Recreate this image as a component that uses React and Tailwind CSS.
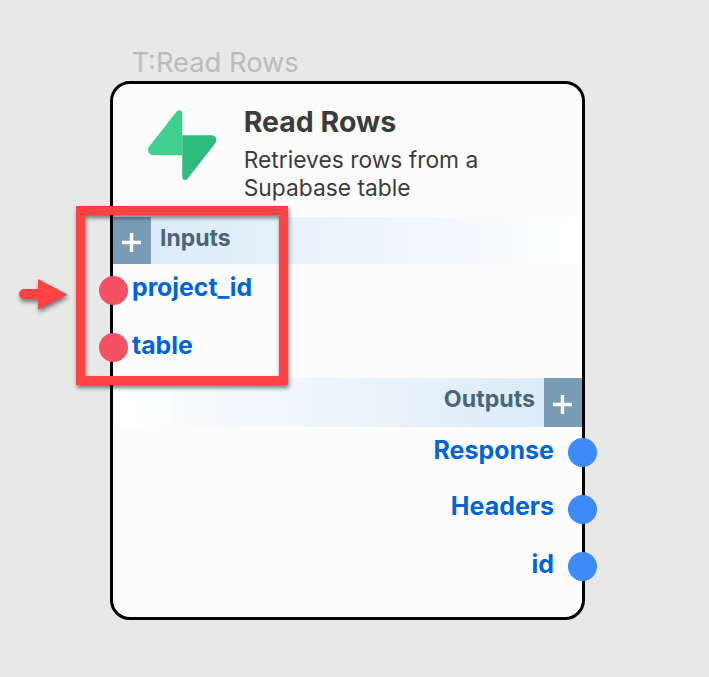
function SupabaseLogo() {
  return (
    <svg className="mt-[26px] ml-[35px] h-[70px] w-[69px] shrink-0" viewBox="0 0 69 70">
      <path d="M34.300 2.8V45.3H5.5C.9 45.3-1.6 40 1.2 36.5L28.5 1.7C30.4-.9 34.300-.1 34.300 2.8Z" fill="#3fcf8e" />
      <path d="M34.300 67.2V25.2H63C67.6 25.2 69.9 30 67.1 33.5L40 68.3C38.1 70.8 34.300 70 34.300 67.2Z" fill="#2fbb7d" />
    </svg>
  );
}

function AddButton({ offset = "pt-[16px]" }) {
  return (
    <button className={`${offset} flex w-[38px] shrink-0 items-start justify-start bg-[#789bb6] pl-[9px]`} aria-label="Add">
      <svg className="h-[19px] w-[19px]" viewBox="0 0 19 19">
        <path d="M9.500 0V19M0 9.500H19" stroke="#fff" strokeWidth="3.4" />
      </svg>
    </button>
  );
}

function InputPort({ name, lift = "-mt-[6px]" }) {
  return (
    <div className="-ml-[14px] flex h-[29px] items-center gap-[4px]">
      <span className="size-[29px] shrink-0 rounded-full bg-[#f55064]" />
      <span className={`${lift} text-[24.800px] leading-[29px] font-bold text-[#0064d9]`}>{name}</span>
    </div>
  );
}

function OutputPort({ name, lift = "-mt-[4px]" }) {
  return (
    <div className="-mr-[15px] flex h-[29px] items-center justify-end gap-[14px]">
      <span className={`${lift} text-[25px] leading-[29px] font-bold text-[#0064d9]`}>{name}</span>
      <span className="size-[29px] shrink-0 rounded-full bg-[#3d8afa]" />
    </div>
  );
}

export default function App() {
  return (
    <main className="relative h-[677px] w-[709px] overflow-hidden bg-[#e8e8e8] pt-[44px] pl-[110px] font-['Inter',sans-serif]">
      <div className="h-[37px] pt-px pl-[21.5px] text-[27.3px] leading-[36px] whitespace-nowrap text-[#bbbbbb]">T:Read Rows</div>
      <section className="h-[539px] w-[475px] rounded-[20px] border-[3px] border-black bg-[#fcfcfc]">
        <header className="flex h-[133px]">
          <SupabaseLogo />
          <div className="ml-[26.7px] pt-[21px] text-[#3c3c3c]">
            <h1 className="text-[28.5px] leading-[34px] font-bold whitespace-nowrap">Read Rows</h1>
            <p className="mt-[7px] text-[22.8px] leading-[28px] whitespace-nowrap">
              Retrieves rows from a<br />Supabase table
            </p>
          </div>
        </header>
        <div className="flex h-[47px] bg-linear-to-r from-[#d9eaf7] via-[#ebf4fc] to-white">
          <AddButton />
          <h2 className="ml-[9px] text-[23px] leading-[42px] font-bold text-[#4b6580]">Inputs</h2>
        </div>
        <div className="flex h-[114px] flex-col gap-[28px] pt-[12px]">
          <InputPort name="project_id" />
          <InputPort name="table" lift="-mt-[4px]" />
        </div>
        <div className="flex h-[49px] justify-end bg-linear-to-l from-[#d9eaf7] via-[#ebf4fc] to-white">
          <h2 className="mr-[9px] text-[23.2px] leading-[42px] font-bold text-[#4b6580]">Outputs</h2>
          <AddButton offset="pt-[17px]" />
        </div>
        <div className="flex flex-col gap-[28px] pt-[11px]">
          <OutputPort name="Response" />
          <OutputPort name="Headers" lift="-mt-[6px]" />
          <OutputPort name="id" />
        </div>
      </section>
      <div className="absolute top-[206px] left-[76px] h-[179px] w-[212px] border-[9px] border-[#ff4343] drop-shadow-[1px_3px_2px_rgba(0,0,0,0.5)]" />
      <svg className="absolute top-[279px] left-[19px] h-[31px] w-[49px] overflow-visible drop-shadow-[1px_3px_2px_rgba(0,0,0,0.5)]" viewBox="0 0 49 31">
        <path d="M5 10H19V0L48.500 15.500L19 30.500V20H5A5 5 0 0 1 5 10Z" fill="#ff4343" />
      </svg>
    </main>
  );
}
